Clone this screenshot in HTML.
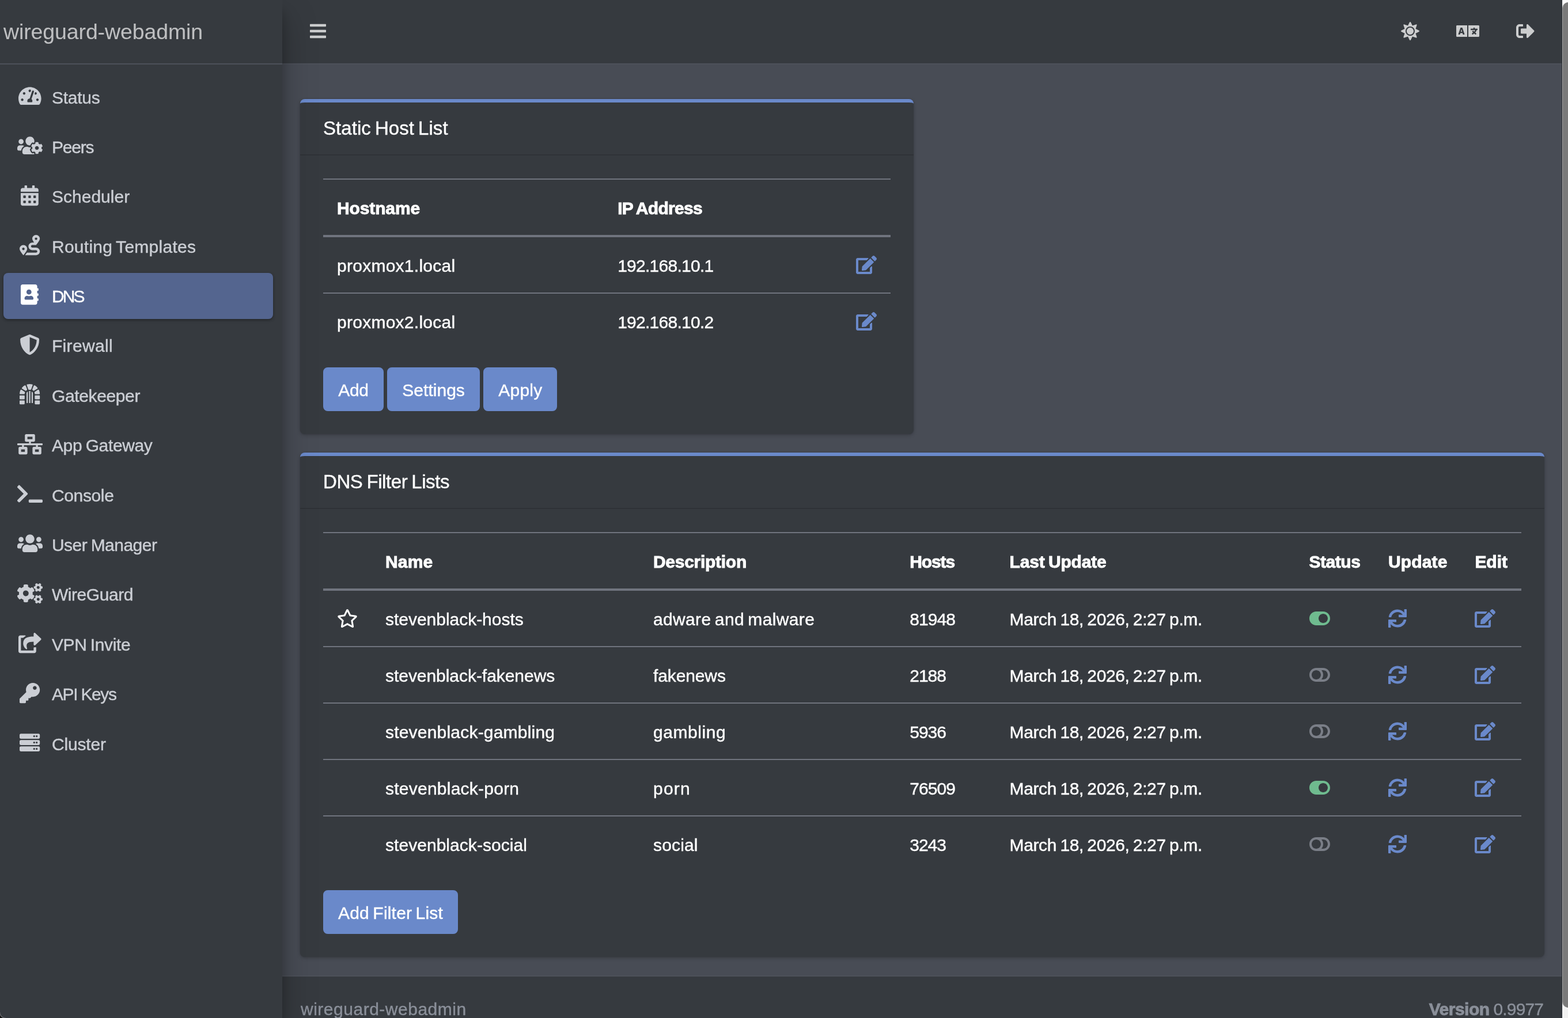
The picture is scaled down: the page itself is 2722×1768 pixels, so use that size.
<!DOCTYPE html>
<html lang="en">
<head>
<meta charset="utf-8">
<title>wireguard-webadmin</title>
<style>
*,*::before,*::after{box-sizing:border-box}
html{font-size:32px;-webkit-text-size-adjust:100%}
body{margin:0;width:2722px;height:1768px;overflow:hidden;position:relative;background:#484c55;color:#fff;
 font-family:"Liberation Sans", sans-serif;font-size:1rem;font-weight:400;line-height:1.5;text-align:left}
a{text-decoration:none;color:inherit}
p{margin:0}
ul{list-style:none;margin:0;padding:0}
svg.fa{display:inline-block;height:1em;overflow:visible;vertical-align:-.125em;fill:currentColor;position:relative;top:1.7px}
.t{white-space:nowrap;position:relative;top:2px}
.nav-sidebar .t{top:1px}
.card-title .t{top:0}
.brand-link .t{top:0}
th .t{top:1.5px}
.main-footer .t{top:1px}
#page{position:absolute;left:-10px;top:0;width:2722px;height:1768px}
/* navbar */
.main-header{position:absolute;left:500px;top:0;right:0;height:112px;background:#363a3f;border-bottom:2px solid #4d515a;
 display:flex;align-items:flex-start;padding:14.3px 16px 0;color:rgba(255,255,255,.75)}
.navbar-nav{display:flex;flex-direction:row}
.navbar-nav.ml-auto{margin-left:auto}
.main-header .nav-link{display:block;padding:.5rem 1rem;height:2.5rem;position:relative}
/* sidebar */
.main-sidebar{position:absolute;left:0;top:0;width:500px;height:1768px;background:#363a3f;z-index:5;
 box-shadow:0 28px 56px rgba(0,0,0,.25),0 20px 20px rgba(0,0,0,.22)}
.brand-link{display:block;font-size:1.25rem;line-height:1.5;height:112px;padding:.8125rem .5rem 0;border-bottom:2px solid #4d515a;
 color:rgba(255,255,255,.8);white-space:nowrap;font-weight:300}
.sidebar{padding:0 .5rem}
.sidebar nav{margin-top:16.5px}
.nav-sidebar .nav-link{display:block;position:relative;padding:.5rem 1rem .5rem 18.4px;margin-bottom:.2rem;border-radius:.25rem;color:#cbced4;white-space:nowrap}
.nav-sidebar .nav-link p{display:inline;margin:0}
.nav-sidebar .nav-link.active{background:#54658f;color:#fff;box-shadow:0 2px 6px rgba(0,0,0,.12),0 2px 4px rgba(0,0,0,.24)}
.nav-icon{display:inline-block;font-style:normal;line-height:1;font-size:1.1rem;width:1.6rem;margin-left:.05rem;margin-right:.2rem;text-align:center;white-space:nowrap}
.nav-icon svg{margin:0 -1em}
.sp{display:inline-block;width:6.4px}
/* content */
.content-wrapper{position:absolute;left:500px;top:112px;right:0;bottom:0;background:#484c55}
.content{position:absolute;left:531px;top:172px;width:2160px}
.card{position:relative;background:#363a3f;color:#fff;border-radius:.25rem;margin-bottom:1rem;
 box-shadow:0 0 2px rgba(0,0,0,.125),0 2px 6px rgba(0,0,0,.2);border-top:6px solid #6a89ca}
.card-header{padding:.75rem 1.25rem;border-bottom:2px solid rgba(0,0,0,.125);border-radius:.25rem .25rem 0 0}
.card-header::after{content:"";display:block;clear:both}
.card-title{float:left;font-size:1.1rem;font-weight:400;margin:0;line-height:1.2}
.card-body{padding:1.25rem}
table{width:100%;border-collapse:collapse;margin-bottom:1rem;color:#fff}
th,td{padding:.75rem;vertical-align:top;border-top:2px solid #70747e;text-align:left}
thead th{vertical-align:bottom;border-bottom:4px solid #70747e;font-weight:700}
td.min,th.min{width:1%;white-space:nowrap}
.lnk{color:#6a89ca}
.tog-on{color:#6fbb8f}
.tog-off{color:#7a7e87}
.btn{display:inline-block;font-weight:400;color:#fff;background:#6a89ca;border:2px solid #6a89ca;padding:.375rem .75rem;font-size:1rem;line-height:1.5;border-radius:.25rem;text-align:center;vertical-align:middle;
 box-shadow:none}
.col6{width:1065px}
/* footer */
.main-footer{position:absolute;left:500px;right:0;top:1694px;height:120px;background:#363a3f;border-top:2px solid #4d515a;color:#8a8f99;padding:1rem}
.float-right{float:right}
b{font-weight:700}
/* scrollbar */
#sb{position:absolute;left:2711px;top:0;width:11px;height:1768px;background:linear-gradient(#fcfcfc,#f2f2f2);border-left:1px solid #2f3237;z-index:10;overflow:hidden}
#sb i{position:absolute;left:1px;box-shadow:-1px 0 0 #a6a6a6;top:4px;width:30px;height:1746px;border-radius:10px;background:#7a7a7a}
#wc{position:absolute;left:0;top:1758px;width:10px;height:10px;z-index:11;background:radial-gradient(circle at 100% 0,rgba(0,0,0,0) 0,rgba(0,0,0,0) 9.2px,#63656a 10px,#63656a 10.6px,#0d0d0d 11.6px)}
body{word-spacing:-2.4906px}
#page{will-change:transform}
.t{display:inline-block;line-height:1;vertical-align:baseline;-webkit-text-stroke:.4px currentColor}
th .t,b .t{-webkit-text-stroke:.9px currentColor}
.brand-link .t{-webkit-text-stroke:0;color:rgba(255,255,255,.68)}
svg.fa{top:.7px}
.nav-icon svg.fa{top:.2px}

</style>
</head>
<body>
<div id="page">
 <div class="content-wrapper"></div>
 <nav class="main-header">
  <ul class="navbar-nav"><li><a class="nav-link"><svg class="fa " viewBox="0 -448 448 512" style="width:0.875em;" aria-hidden="true"><path transform="scale(1,-1)" d="M16 316c-8.83691 0 -16 7.16309 -16 16v40c0 8.83691 7.16309 16 16 16h416c8.83691 0 16 -7.16309 16 -16v-40c0 -8.83691 -7.16309 -16 -16 -16h-416zM16 156c-8.83691 0 -16 7.16309 -16 16v40c0 8.83691 7.16309 16 16 16h416c8.83691 0 16 -7.16309 16 -16v-40 c0 -8.83691 -7.16309 -16 -16 -16h-416zM16 -4c-8.83691 0 -16 7.16309 -16 16v40c0 8.83691 7.16309 16 16 16h416c8.83691 0 16 -7.16309 16 -16v-40c0 -8.83691 -7.16309 -16 -16 -16h-416z"/></svg></a></li></ul>
  <ul class="navbar-nav ml-auto">
   <li><a class="nav-link"><svg class="fa " viewBox="0 -448 512 512" style="width:1em;" aria-hidden="true"><path transform="scale(1,-1)" d="M256 288c52.9004 0 96 -43.0996 96 -96s-43.0996 -96 -96 -96s-96 43.0996 -96 96s43.0996 96 96 96zM502.4 207.5c12.7998 -6.40039 12.7998 -24.5996 -0.200195 -31.0996l-94.7002 -47.3008l33.5 -100.399c4.59961 -13.5 -8.2998 -26.4004 -21.9004 -21.9004 l-100.399 33.5l-47.2998 -94.7002c-6.40039 -12.7998 -24.6006 -12.7998 -31 0l-47.3008 94.7002l-100.399 -33.5c-13.5 -4.59961 -26.4004 8.2998 -21.9004 21.9004l33.5 100.5l-94.7002 47.2998c-12.7998 6.40039 -12.7998 24.5996 0 31l94.7002 47.4004l-33.5 100.399 c-4.59961 13.5 8.2998 26.4004 21.9004 21.9004l100.5 -33.5l47.2998 94.7002c6.40039 12.7998 24.5996 12.7998 31 0l47.4004 -94.8008l100.399 33.5c13.5 4.60059 26.4004 -8.2998 21.9004 -21.8994l-33.5 -100.4zM346.5 101.5c49.9004 49.9004 49.9004 131.1 0 181 s-131.1 49.9004 -181 0s-49.9004 -131.1 0 -181s131.1 -49.9004 181 0z"/></svg></a></li>
   <li><a class="nav-link"><svg class="fa " viewBox="0 -448 640 512" style="width:1.25em;" aria-hidden="true"><path transform="scale(1,-1)" d="M152.1 211.8l10.9004 -37.5h-38.0996l11.0996 37.5c3.5 12.1006 7.7998 33.2002 7.7998 33.2002h0.5s4.2998 -21.0996 7.7998 -33.2002zM616 352c13.2998 0 24 -10.7002 24 -24v-272c0 -13.2998 -10.7002 -24 -24 -24h-280v320h280zM592 232v16 c0 6.59961 -5.40039 12 -12 12h-64v16c0 6.59961 -5.40039 12 -12 12h-16c-6.59961 0 -12 -5.40039 -12 -12v-16h-64c-6.59961 0 -12 -5.40039 -12 -12v-16c0 -6.59961 5.40039 -12 12 -12h114.3c-6.2002 -14.2998 -16.5 -29 -30 -43.2002 c-6.59961 6.90039 -12.3994 13.9004 -17.3994 20.9004c-3.60059 5.09961 -10.6006 6.59961 -16 3.39941l-7.30078 -4.2998l-6.5 -3.89941c-5.89941 -3.5 -7.69922 -11.4004 -3.69922 -17.1006c6.09961 -8.7002 13.0996 -17.2998 21 -25.7002 c-8.10059 -6.2998 -16.8008 -12.2998 -26.1006 -18c-5.59961 -3.39941 -7.39941 -10.5996 -4.2002 -16.1992l7.90039 -13.9004c3.40039 -5.90039 10.9004 -7.7998 16.7002 -4.2998c12.7002 7.7998 24.5 16.2002 35.3994 24.8994 c10.9004 -8.7998 22.8008 -17.0996 35.4004 -24.8994c5.7998 -3.5 13.2998 -1.60059 16.7002 4.2998l7.89941 13.9004c3.2002 5.69922 1.40039 12.7998 -4.09961 16.1992c-9 5.5 -17.7002 11.6006 -26.0996 18c21 22.5 35.7998 46.3008 42.6992 69.9004h11.4004 c6.59961 0 12 5.40039 12 12zM0 328c0 13.2998 10.7002 24 24 24h280v-320h-280c-13.2998 0 -24 10.7002 -24 24v272zM58.9004 111.9c-2.60059 -7.80078 3.19922 -15.9004 11.3994 -15.9004h22.9004c5.2998 0 10 3.59961 11.5 8.7002l9.09961 31.7998h60.2002 l9.40039 -31.9004c1.4668 -4.96582 6.06152 -8.5957 11.5 -8.59961h22.8994c8.2998 0 14 8.09961 11.4004 15.9004l-57.5 169.1c-1.7002 4.7998 -6.2998 8.09961 -11.4004 8.09961h-32.5c-5.2002 0 -9.7002 -3.19922 -11.3994 -8.09961z"/></svg></a></li>
   <li><a class="nav-link"><svg class="fa " viewBox="0 -448 512 512" style="width:1em;" aria-hidden="true"><path transform="scale(1,-1)" d="M497 175l-168 -168c-15 -15 -41 -4.5 -41 17v96h-136c-13.2998 0 -24 10.7002 -24 24v96c0 13.2998 10.7002 24 24 24h136v96c0 21.4004 25.9004 32 41 17l168 -168c9.2998 -9.40039 9.2998 -24.5996 0 -34zM192 12c0 -6.59961 -5.40039 -12 -12 -12h-84 c-53 0 -96 43 -96 96v192c0 53 43 96 96 96h84c6.59961 0 12 -5.40039 12 -12v-40c0 -6.59961 -5.40039 -12 -12 -12h-84c-17.7002 0 -32 -14.2998 -32 -32v-192c0 -17.7002 14.2998 -32 32 -32h84c6.59961 0 12 -5.40039 12 -12v-40z"/></svg></a></li>
  </ul>
 </nav>
 <div class="content">
  <div class="card col6">
   <div class="card-header"><h3 class="card-title"><span class="t" id="t39" style="width:216.59px;font-size:33.00px;letter-spacing:0.059px;word-spacing:-2.188px;top:-1.00px;left:0.00px">Static Host List</span></h3></div>
   <div class="card-body">
    <table id="tb1">
     <thead><tr><th><span class="t" id="t40" style="width:144.14px;font-size:30.00px;letter-spacing:-0.129px;word-spacing:0.000px;top:0.50px;left:0.00px">Hostname</span></th><th><span class="t" id="t41" style="width:147.47px;font-size:30.00px;letter-spacing:-0.709px;word-spacing:-1.226px;top:0.50px;left:0.00px">IP Address</span></th><th></th></tr></thead>
     <tbody>
<tr><td><span class="t" id="t15" style="width:205.14px;font-size:30.00px;letter-spacing:0.260px;word-spacing:0.000px;top:1.00px;left:0.00px">proxmox1.local</span></td><td><span class="t" id="t16" style="width:167.05px;font-size:30.00px;letter-spacing:-0.739px;word-spacing:0.000px;top:1.00px;left:0.00px">192.168.10.1</span></td><td class="min"><a class="lnk"><svg class="fa " viewBox="0 -448 576 512" style="width:1.125em;" aria-hidden="true"><path transform="scale(1,-1)" d="M402.6 364.8l90.2002 -90.2002c3.7998 -3.7998 3.7998 -10 0 -13.7998l-218.399 -218.399l-92.8008 -10.3008c-12.3994 -1.39941 -22.8994 9.10059 -21.5 21.5l10.3008 92.8008l218.399 218.399c3.7998 3.7998 10 3.7998 13.7998 0zM564.6 387.7 c15.2002 -15.2002 15.2002 -39.9004 0 -55.2002l-35.3994 -35.4004c-3.7998 -3.7998 -10 -3.7998 -13.7998 0l-90.2002 90.2002c-3.7998 3.7998 -3.7998 10 0 13.7998l35.3994 35.4004c15.3008 15.2002 40 15.2002 55.2002 0zM384 101.8c0 3.2002 1.2998 6.2002 3.5 8.5 l40 40c7.59961 7.5 20.5 2.2002 20.5 -8.5v-157.8c0 -26.5 -21.5 -48 -48 -48h-352c-26.5 0 -48 21.5 -48 48v352c0 26.5 21.5 48 48 48h285.8c10.7002 0 16.1006 -12.9004 8.5 -20.5l-40 -40c-2.2998 -2.2002 -5.2998 -3.5 -8.5 -3.5h-229.8v-320h320v101.8z"/></svg></a></td></tr>
<tr><td><span class="t" id="t17" style="width:205.14px;font-size:30.00px;letter-spacing:0.260px;word-spacing:0.000px;top:1.00px;left:0.00px">proxmox2.local</span></td><td><span class="t" id="t18" style="width:167.05px;font-size:30.00px;letter-spacing:-0.739px;word-spacing:0.000px;top:1.00px;left:0.00px">192.168.10.2</span></td><td class="min"><a class="lnk"><svg class="fa " viewBox="0 -448 576 512" style="width:1.125em;" aria-hidden="true"><path transform="scale(1,-1)" d="M402.6 364.8l90.2002 -90.2002c3.7998 -3.7998 3.7998 -10 0 -13.7998l-218.399 -218.399l-92.8008 -10.3008c-12.3994 -1.39941 -22.8994 9.10059 -21.5 21.5l10.3008 92.8008l218.399 218.399c3.7998 3.7998 10 3.7998 13.7998 0zM564.6 387.7 c15.2002 -15.2002 15.2002 -39.9004 0 -55.2002l-35.3994 -35.4004c-3.7998 -3.7998 -10 -3.7998 -13.7998 0l-90.2002 90.2002c-3.7998 3.7998 -3.7998 10 0 13.7998l35.3994 35.4004c15.3008 15.2002 40 15.2002 55.2002 0zM384 101.8c0 3.2002 1.2998 6.2002 3.5 8.5 l40 40c7.59961 7.5 20.5 2.2002 20.5 -8.5v-157.8c0 -26.5 -21.5 -48 -48 -48h-352c-26.5 0 -48 21.5 -48 48v352c0 26.5 21.5 48 48 48h285.8c10.7002 0 16.1006 -12.9004 8.5 -20.5l-40 -40c-2.2998 -2.2002 -5.2998 -3.5 -8.5 -3.5h-229.8v-320h320v101.8z"/></svg></a></td></tr>

     </tbody>
    </table>
    <a class="btn"><span class="t" id="t42" style="width:52.91px;font-size:30.00px;letter-spacing:-0.242px;word-spacing:0.000px;top:1.00px;left:0.00px">Add</span></a>
    <a class="btn"><span class="t" id="t43" style="width:108.55px;font-size:30.00px;letter-spacing:0.020px;word-spacing:0.000px;top:1.00px;left:0.00px">Settings</span></a>
    <a class="btn"><span class="t" id="t44" style="width:76.02px;font-size:30.00px;letter-spacing:0.242px;word-spacing:0.000px;top:1.00px;left:0.00px">Apply</span></a>
   </div>
  </div>
  <div class="card">
   <div class="card-header"><h3 class="card-title"><span class="t" id="t45" style="width:219.45px;font-size:33.00px;letter-spacing:-0.423px;word-spacing:-1.706px;top:-1.00px;left:0.00px">DNS Filter Lists</span></h3></div>
   <div class="card-body">
    <table id="tb2">
     <thead><tr><th class="c0"></th><th class="c1"><span class="t" id="t46" style="width:82.16px;font-size:30.00px;letter-spacing:0.146px;word-spacing:0.000px;top:0.50px;left:0.00px">Name</span></th><th class="c2"><span class="t" id="t47" style="width:162.27px;font-size:30.00px;letter-spacing:-0.277px;word-spacing:0.000px;top:0.50px;left:0.00px">Description</span></th><th class="c3"><span class="t" id="t48" style="width:78.83px;font-size:30.00px;letter-spacing:-1.133px;word-spacing:0.000px;top:0.50px;left:0.00px">Hosts</span></th><th class="c4"><span class="t" id="t49" style="width:168.12px;font-size:30.00px;letter-spacing:-0.183px;word-spacing:-1.752px;top:0.50px;left:0.00px">Last Update</span></th><th class="c5"><span class="t" id="t50" style="width:89.39px;font-size:30.00px;letter-spacing:-0.459px;word-spacing:0.000px;top:0.50px;left:0.00px">Status</span></th><th class="c6"><span class="t" id="t51" style="width:102.48px;font-size:30.00px;letter-spacing:0.159px;word-spacing:0.000px;top:0.50px;left:0.00px">Update</span></th><th class="c7"><span class="t" id="t52" style="width:56.64px;font-size:30.00px;letter-spacing:-0.010px;word-spacing:0.000px;top:0.50px;left:0.00px">Edit</span></th></tr></thead>
     <tbody>
<tr><td class="min c0"><svg class="fa " viewBox="0 -448 576 512" style="width:1.125em;" aria-hidden="true"><path transform="scale(1,-1)" d="M528.1 276.5c26.2002 -3.7998 36.7002 -36.0996 17.7002 -54.5996l-105.7 -103l25 -145.5c4.5 -26.3008 -23.1992 -45.9004 -46.3994 -33.7002l-130.7 68.7002l-130.7 -68.7002c-23.2002 -12.2998 -50.8994 7.39941 -46.3994 33.7002l25 145.5l-105.7 103 c-19 18.5 -8.5 50.7998 17.7002 54.5996l146.1 21.2998l65.2998 132.4c11.7998 23.8994 45.7002 23.5996 57.4004 0l65.2998 -132.4zM388.6 135.7l100.601 98l-139 20.2002l-62.2002 126l-62.2002 -126l-139 -20.2002l100.601 -98l-23.7002 -138.4l124.3 65.2998 l124.3 -65.2998z"/></svg></td><td class="c1"><span class="t" id="t19" style="width:239.69px;font-size:30.00px;letter-spacing:-0.027px;word-spacing:0.000px;top:1.00px;left:0.00px">stevenblack-hosts</span></td><td class="c2"><span class="t" id="t20" style="width:279.84px;font-size:30.00px;letter-spacing:0.349px;word-spacing:-2.284px;top:1.00px;left:0.00px">adware and malware</span></td><td class="c3"><span class="t" id="t21" style="width:79.53px;font-size:30.00px;letter-spacing:-0.977px;word-spacing:0.000px;top:1.00px;left:0.00px">81948</span></td><td class="c4"><span class="t" id="t22" style="width:334.73px;font-size:30.00px;letter-spacing:-0.386px;word-spacing:-1.549px;top:1.00px;left:0.00px">March 18, 2026, 2:27 p.m.</span></td><td class="min c5"><span class="tog-on"><svg class="fa " viewBox="0 -448 576 512" style="width:1.125em;" aria-hidden="true"><path transform="scale(1,-1)" d="M384 384c106 0 192 -86 192 -192s-86 -192 -192 -192h-192c-106 0 -192 86 -192 192s86 192 192 192h192zM384 64c70.7002 0 128 57.2002 128 128c0 70.7002 -57.2002 128 -128 128c-70.7002 0 -128 -57.2002 -128 -128c0 -70.7002 57.2002 -128 128 -128z"/></svg></span></td><td class="min c6"><a class="lnk"><svg class="fa " viewBox="0 -448 512 512" style="width:1em;" aria-hidden="true"><path transform="scale(1,-1)" d="M440.65 435.43c-0.00976562 0.192383 -0.0136719 0.375977 -0.0136719 0.570312c0 6.62109 5.37305 11.9961 11.9932 12h47.3701c6.62305 0 12 -5.37695 12 -12v-200.35c0 -6.62305 -5.37695 -12 -12 -12h-200.22c-6.62305 0 -12 5.37695 -12 12v47.4092 c0 0.00488281 -0.00878906 0.00976562 -0.00878906 0.0136719c0 6.62305 5.37695 12 12 12c0.194336 0 0.386719 -0.00390625 0.578125 -0.0136719l101.46 -4.85938c-31.5938 46.9941 -85.1406 77.6738 -145.973 77.6738c-82.8662 0 -152.428 -57.4229 -171.027 -134.614 c-1.24219 -5.29688 -5.99707 -9.25391 -11.6699 -9.25977h-49.0498c-6.62305 0 -12 5.36719 -12 11.9893c0 0.748047 0.0693359 1.48047 0.200195 2.19043c21.6201 114.9 122.44 201.82 243.54 201.82c0.0966797 0 0.123047 0.141602 0.219727 0.141602 c75.5615 0 143.248 -33.9814 188.601 -87.4814zM255.83 16c0.015625 0 0.0185547 0.0898438 0.0332031 0.0898438c82.8701 0 152.43 57.4434 170.997 134.65c1.24219 5.29688 5.99707 9.25391 11.6699 9.25977h49.0498c6.62305 0 12 -5.36719 12 -11.9893 c0 -0.748047 -0.0693359 -1.48047 -0.200195 -2.19043c-21.6201 -114.9 -122.439 -201.82 -243.55 -201.82c-0.0800781 0 -0.0908203 -0.140625 -0.170898 -0.140625c-75.4814 0 -143.106 33.9082 -188.459 87.3105l4.14941 -82.5703 c0.0107422 -0.201172 0.015625 -0.395508 0.015625 -0.599609c0 -6.62305 -5.37695 -12 -12 -12h-0.015625h-47.3496c-6.62305 0 -12 5.37695 -12 12v200.33c0 6.62305 5.37695 12 12 12h200.2c6.62305 0 12 -5.37695 12 -12v-47.4004 c0 -0.00390625 0.0078125 -0.00878906 0.0078125 -0.0136719c0 -6.62305 -5.37695 -12 -12 -12c-0.193359 0 -0.386719 0.00488281 -0.578125 0.0136719l-101.8 4.87012c31.5254 -47.0088 85.0449 -77.7998 145.847 -77.7998h0.15332z"/></svg></a></td><td class="min c7"><a class="lnk"><svg class="fa " viewBox="0 -448 576 512" style="width:1.125em;" aria-hidden="true"><path transform="scale(1,-1)" d="M402.6 364.8l90.2002 -90.2002c3.7998 -3.7998 3.7998 -10 0 -13.7998l-218.399 -218.399l-92.8008 -10.3008c-12.3994 -1.39941 -22.8994 9.10059 -21.5 21.5l10.3008 92.8008l218.399 218.399c3.7998 3.7998 10 3.7998 13.7998 0zM564.6 387.7 c15.2002 -15.2002 15.2002 -39.9004 0 -55.2002l-35.3994 -35.4004c-3.7998 -3.7998 -10 -3.7998 -13.7998 0l-90.2002 90.2002c-3.7998 3.7998 -3.7998 10 0 13.7998l35.3994 35.4004c15.3008 15.2002 40 15.2002 55.2002 0zM384 101.8c0 3.2002 1.2998 6.2002 3.5 8.5 l40 40c7.59961 7.5 20.5 2.2002 20.5 -8.5v-157.8c0 -26.5 -21.5 -48 -48 -48h-352c-26.5 0 -48 21.5 -48 48v352c0 26.5 21.5 48 48 48h285.8c10.7002 0 16.1006 -12.9004 8.5 -20.5l-40 -40c-2.2998 -2.2002 -5.2998 -3.5 -8.5 -3.5h-229.8v-320h320v101.8z"/></svg></a></td></tr>
<tr><td class="min c0"></td><td class="c1"><span class="t" id="t23" style="width:294.27px;font-size:30.00px;letter-spacing:-0.047px;word-spacing:0.000px;top:1.00px;left:0.00px">stevenblack-fakenews</span></td><td class="c2"><span class="t" id="t24" style="width:125.94px;font-size:30.00px;letter-spacing:-0.116px;word-spacing:0.000px;top:1.00px;left:0.00px">fakenews</span></td><td class="c3"><span class="t" id="t25" style="width:63.62px;font-size:30.00px;letter-spacing:-1.042px;word-spacing:0.000px;top:1.00px;left:0.00px">2188</span></td><td class="c4"><span class="t" id="t26" style="width:334.73px;font-size:30.00px;letter-spacing:-0.386px;word-spacing:-1.549px;top:1.00px;left:0.00px">March 18, 2026, 2:27 p.m.</span></td><td class="min c5"><span class="tog-off"><svg class="fa " viewBox="0 -448 576 512" style="width:1.125em;" aria-hidden="true"><path transform="scale(1,-1)" d="M384 384c106.039 0 192 -85.9609 192 -192s-85.9609 -192 -192 -192h-192c-106.039 0 -192 85.9609 -192 192s85.9609 192 192 192h192zM64 192c0 -70.751 57.2588 -128 128 -128c70.751 0 128 57.2588 128 128c0 70.751 -57.2588 128 -128 128 c-70.751 0 -128 -57.2588 -128 -128zM384 64c70.751 0 128 57.2598 128 128c0 70.751 -57.2588 128 -128 128h-48.9053c65.2363 -72.8799 65.2168 -183.142 0 -256h48.9053z"/></svg></span></td><td class="min c6"><a class="lnk"><svg class="fa " viewBox="0 -448 512 512" style="width:1em;" aria-hidden="true"><path transform="scale(1,-1)" d="M440.65 435.43c-0.00976562 0.192383 -0.0136719 0.375977 -0.0136719 0.570312c0 6.62109 5.37305 11.9961 11.9932 12h47.3701c6.62305 0 12 -5.37695 12 -12v-200.35c0 -6.62305 -5.37695 -12 -12 -12h-200.22c-6.62305 0 -12 5.37695 -12 12v47.4092 c0 0.00488281 -0.00878906 0.00976562 -0.00878906 0.0136719c0 6.62305 5.37695 12 12 12c0.194336 0 0.386719 -0.00390625 0.578125 -0.0136719l101.46 -4.85938c-31.5938 46.9941 -85.1406 77.6738 -145.973 77.6738c-82.8662 0 -152.428 -57.4229 -171.027 -134.614 c-1.24219 -5.29688 -5.99707 -9.25391 -11.6699 -9.25977h-49.0498c-6.62305 0 -12 5.36719 -12 11.9893c0 0.748047 0.0693359 1.48047 0.200195 2.19043c21.6201 114.9 122.44 201.82 243.54 201.82c0.0966797 0 0.123047 0.141602 0.219727 0.141602 c75.5615 0 143.248 -33.9814 188.601 -87.4814zM255.83 16c0.015625 0 0.0185547 0.0898438 0.0332031 0.0898438c82.8701 0 152.43 57.4434 170.997 134.65c1.24219 5.29688 5.99707 9.25391 11.6699 9.25977h49.0498c6.62305 0 12 -5.36719 12 -11.9893 c0 -0.748047 -0.0693359 -1.48047 -0.200195 -2.19043c-21.6201 -114.9 -122.439 -201.82 -243.55 -201.82c-0.0800781 0 -0.0908203 -0.140625 -0.170898 -0.140625c-75.4814 0 -143.106 33.9082 -188.459 87.3105l4.14941 -82.5703 c0.0107422 -0.201172 0.015625 -0.395508 0.015625 -0.599609c0 -6.62305 -5.37695 -12 -12 -12h-0.015625h-47.3496c-6.62305 0 -12 5.37695 -12 12v200.33c0 6.62305 5.37695 12 12 12h200.2c6.62305 0 12 -5.37695 12 -12v-47.4004 c0 -0.00390625 0.0078125 -0.00878906 0.0078125 -0.0136719c0 -6.62305 -5.37695 -12 -12 -12c-0.193359 0 -0.386719 0.00488281 -0.578125 0.0136719l-101.8 4.87012c31.5254 -47.0088 85.0449 -77.7998 145.847 -77.7998h0.15332z"/></svg></a></td><td class="min c7"><a class="lnk"><svg class="fa " viewBox="0 -448 576 512" style="width:1.125em;" aria-hidden="true"><path transform="scale(1,-1)" d="M402.6 364.8l90.2002 -90.2002c3.7998 -3.7998 3.7998 -10 0 -13.7998l-218.399 -218.399l-92.8008 -10.3008c-12.3994 -1.39941 -22.8994 9.10059 -21.5 21.5l10.3008 92.8008l218.399 218.399c3.7998 3.7998 10 3.7998 13.7998 0zM564.6 387.7 c15.2002 -15.2002 15.2002 -39.9004 0 -55.2002l-35.3994 -35.4004c-3.7998 -3.7998 -10 -3.7998 -13.7998 0l-90.2002 90.2002c-3.7998 3.7998 -3.7998 10 0 13.7998l35.3994 35.4004c15.3008 15.2002 40 15.2002 55.2002 0zM384 101.8c0 3.2002 1.2998 6.2002 3.5 8.5 l40 40c7.59961 7.5 20.5 2.2002 20.5 -8.5v-157.8c0 -26.5 -21.5 -48 -48 -48h-352c-26.5 0 -48 21.5 -48 48v352c0 26.5 21.5 48 48 48h285.8c10.7002 0 16.1006 -12.9004 8.5 -20.5l-40 -40c-2.2998 -2.2002 -5.2998 -3.5 -8.5 -3.5h-229.8v-320h320v101.8z"/></svg></a></td></tr>
<tr><td class="min c0"></td><td class="c1"><span class="t" id="t27" style="width:293.97px;font-size:30.00px;letter-spacing:0.201px;word-spacing:0.000px;top:1.00px;left:0.00px">stevenblack-gambling</span></td><td class="c2"><span class="t" id="t28" style="width:125.64px;font-size:30.00px;letter-spacing:0.556px;word-spacing:0.000px;top:1.00px;left:0.00px">gambling</span></td><td class="c3"><span class="t" id="t29" style="width:63.62px;font-size:30.00px;letter-spacing:-1.042px;word-spacing:0.000px;top:1.00px;left:0.00px">5936</span></td><td class="c4"><span class="t" id="t30" style="width:334.73px;font-size:30.00px;letter-spacing:-0.386px;word-spacing:-1.549px;top:1.00px;left:0.00px">March 18, 2026, 2:27 p.m.</span></td><td class="min c5"><span class="tog-off"><svg class="fa " viewBox="0 -448 576 512" style="width:1.125em;" aria-hidden="true"><path transform="scale(1,-1)" d="M384 384c106.039 0 192 -85.9609 192 -192s-85.9609 -192 -192 -192h-192c-106.039 0 -192 85.9609 -192 192s85.9609 192 192 192h192zM64 192c0 -70.751 57.2588 -128 128 -128c70.751 0 128 57.2588 128 128c0 70.751 -57.2588 128 -128 128 c-70.751 0 -128 -57.2588 -128 -128zM384 64c70.751 0 128 57.2598 128 128c0 70.751 -57.2588 128 -128 128h-48.9053c65.2363 -72.8799 65.2168 -183.142 0 -256h48.9053z"/></svg></span></td><td class="min c6"><a class="lnk"><svg class="fa " viewBox="0 -448 512 512" style="width:1em;" aria-hidden="true"><path transform="scale(1,-1)" d="M440.65 435.43c-0.00976562 0.192383 -0.0136719 0.375977 -0.0136719 0.570312c0 6.62109 5.37305 11.9961 11.9932 12h47.3701c6.62305 0 12 -5.37695 12 -12v-200.35c0 -6.62305 -5.37695 -12 -12 -12h-200.22c-6.62305 0 -12 5.37695 -12 12v47.4092 c0 0.00488281 -0.00878906 0.00976562 -0.00878906 0.0136719c0 6.62305 5.37695 12 12 12c0.194336 0 0.386719 -0.00390625 0.578125 -0.0136719l101.46 -4.85938c-31.5938 46.9941 -85.1406 77.6738 -145.973 77.6738c-82.8662 0 -152.428 -57.4229 -171.027 -134.614 c-1.24219 -5.29688 -5.99707 -9.25391 -11.6699 -9.25977h-49.0498c-6.62305 0 -12 5.36719 -12 11.9893c0 0.748047 0.0693359 1.48047 0.200195 2.19043c21.6201 114.9 122.44 201.82 243.54 201.82c0.0966797 0 0.123047 0.141602 0.219727 0.141602 c75.5615 0 143.248 -33.9814 188.601 -87.4814zM255.83 16c0.015625 0 0.0185547 0.0898438 0.0332031 0.0898438c82.8701 0 152.43 57.4434 170.997 134.65c1.24219 5.29688 5.99707 9.25391 11.6699 9.25977h49.0498c6.62305 0 12 -5.36719 12 -11.9893 c0 -0.748047 -0.0693359 -1.48047 -0.200195 -2.19043c-21.6201 -114.9 -122.439 -201.82 -243.55 -201.82c-0.0800781 0 -0.0908203 -0.140625 -0.170898 -0.140625c-75.4814 0 -143.106 33.9082 -188.459 87.3105l4.14941 -82.5703 c0.0107422 -0.201172 0.015625 -0.395508 0.015625 -0.599609c0 -6.62305 -5.37695 -12 -12 -12h-0.015625h-47.3496c-6.62305 0 -12 5.37695 -12 12v200.33c0 6.62305 5.37695 12 12 12h200.2c6.62305 0 12 -5.37695 12 -12v-47.4004 c0 -0.00390625 0.0078125 -0.00878906 0.0078125 -0.0136719c0 -6.62305 -5.37695 -12 -12 -12c-0.193359 0 -0.386719 0.00488281 -0.578125 0.0136719l-101.8 4.87012c31.5254 -47.0088 85.0449 -77.7998 145.847 -77.7998h0.15332z"/></svg></a></td><td class="min c7"><a class="lnk"><svg class="fa " viewBox="0 -448 576 512" style="width:1.125em;" aria-hidden="true"><path transform="scale(1,-1)" d="M402.6 364.8l90.2002 -90.2002c3.7998 -3.7998 3.7998 -10 0 -13.7998l-218.399 -218.399l-92.8008 -10.3008c-12.3994 -1.39941 -22.8994 9.10059 -21.5 21.5l10.3008 92.8008l218.399 218.399c3.7998 3.7998 10 3.7998 13.7998 0zM564.6 387.7 c15.2002 -15.2002 15.2002 -39.9004 0 -55.2002l-35.3994 -35.4004c-3.7998 -3.7998 -10 -3.7998 -13.7998 0l-90.2002 90.2002c-3.7998 3.7998 -3.7998 10 0 13.7998l35.3994 35.4004c15.3008 15.2002 40 15.2002 55.2002 0zM384 101.8c0 3.2002 1.2998 6.2002 3.5 8.5 l40 40c7.59961 7.5 20.5 2.2002 20.5 -8.5v-157.8c0 -26.5 -21.5 -48 -48 -48h-352c-26.5 0 -48 21.5 -48 48v352c0 26.5 21.5 48 48 48h285.8c10.7002 0 16.1006 -12.9004 8.5 -20.5l-40 -40c-2.2998 -2.2002 -5.2998 -3.5 -8.5 -3.5h-229.8v-320h320v101.8z"/></svg></a></td></tr>
<tr><td class="min c0"></td><td class="c1"><span class="t" id="t31" style="width:232.05px;font-size:30.00px;letter-spacing:0.239px;word-spacing:0.000px;top:1.00px;left:0.00px">stevenblack-porn</span></td><td class="c2"><span class="t" id="t32" style="width:63.72px;font-size:30.00px;letter-spacing:1.224px;word-spacing:0.000px;top:1.00px;left:0.00px">porn</span></td><td class="c3"><span class="t" id="t33" style="width:79.53px;font-size:30.00px;letter-spacing:-0.977px;word-spacing:0.000px;top:1.00px;left:0.00px">76509</span></td><td class="c4"><span class="t" id="t34" style="width:334.73px;font-size:30.00px;letter-spacing:-0.386px;word-spacing:-1.549px;top:1.00px;left:0.00px">March 18, 2026, 2:27 p.m.</span></td><td class="min c5"><span class="tog-on"><svg class="fa " viewBox="0 -448 576 512" style="width:1.125em;" aria-hidden="true"><path transform="scale(1,-1)" d="M384 384c106 0 192 -86 192 -192s-86 -192 -192 -192h-192c-106 0 -192 86 -192 192s86 192 192 192h192zM384 64c70.7002 0 128 57.2002 128 128c0 70.7002 -57.2002 128 -128 128c-70.7002 0 -128 -57.2002 -128 -128c0 -70.7002 57.2002 -128 128 -128z"/></svg></span></td><td class="min c6"><a class="lnk"><svg class="fa " viewBox="0 -448 512 512" style="width:1em;" aria-hidden="true"><path transform="scale(1,-1)" d="M440.65 435.43c-0.00976562 0.192383 -0.0136719 0.375977 -0.0136719 0.570312c0 6.62109 5.37305 11.9961 11.9932 12h47.3701c6.62305 0 12 -5.37695 12 -12v-200.35c0 -6.62305 -5.37695 -12 -12 -12h-200.22c-6.62305 0 -12 5.37695 -12 12v47.4092 c0 0.00488281 -0.00878906 0.00976562 -0.00878906 0.0136719c0 6.62305 5.37695 12 12 12c0.194336 0 0.386719 -0.00390625 0.578125 -0.0136719l101.46 -4.85938c-31.5938 46.9941 -85.1406 77.6738 -145.973 77.6738c-82.8662 0 -152.428 -57.4229 -171.027 -134.614 c-1.24219 -5.29688 -5.99707 -9.25391 -11.6699 -9.25977h-49.0498c-6.62305 0 -12 5.36719 -12 11.9893c0 0.748047 0.0693359 1.48047 0.200195 2.19043c21.6201 114.9 122.44 201.82 243.54 201.82c0.0966797 0 0.123047 0.141602 0.219727 0.141602 c75.5615 0 143.248 -33.9814 188.601 -87.4814zM255.83 16c0.015625 0 0.0185547 0.0898438 0.0332031 0.0898438c82.8701 0 152.43 57.4434 170.997 134.65c1.24219 5.29688 5.99707 9.25391 11.6699 9.25977h49.0498c6.62305 0 12 -5.36719 12 -11.9893 c0 -0.748047 -0.0693359 -1.48047 -0.200195 -2.19043c-21.6201 -114.9 -122.439 -201.82 -243.55 -201.82c-0.0800781 0 -0.0908203 -0.140625 -0.170898 -0.140625c-75.4814 0 -143.106 33.9082 -188.459 87.3105l4.14941 -82.5703 c0.0107422 -0.201172 0.015625 -0.395508 0.015625 -0.599609c0 -6.62305 -5.37695 -12 -12 -12h-0.015625h-47.3496c-6.62305 0 -12 5.37695 -12 12v200.33c0 6.62305 5.37695 12 12 12h200.2c6.62305 0 12 -5.37695 12 -12v-47.4004 c0 -0.00390625 0.0078125 -0.00878906 0.0078125 -0.0136719c0 -6.62305 -5.37695 -12 -12 -12c-0.193359 0 -0.386719 0.00488281 -0.578125 0.0136719l-101.8 4.87012c31.5254 -47.0088 85.0449 -77.7998 145.847 -77.7998h0.15332z"/></svg></a></td><td class="min c7"><a class="lnk"><svg class="fa " viewBox="0 -448 576 512" style="width:1.125em;" aria-hidden="true"><path transform="scale(1,-1)" d="M402.6 364.8l90.2002 -90.2002c3.7998 -3.7998 3.7998 -10 0 -13.7998l-218.399 -218.399l-92.8008 -10.3008c-12.3994 -1.39941 -22.8994 9.10059 -21.5 21.5l10.3008 92.8008l218.399 218.399c3.7998 3.7998 10 3.7998 13.7998 0zM564.6 387.7 c15.2002 -15.2002 15.2002 -39.9004 0 -55.2002l-35.3994 -35.4004c-3.7998 -3.7998 -10 -3.7998 -13.7998 0l-90.2002 90.2002c-3.7998 3.7998 -3.7998 10 0 13.7998l35.3994 35.4004c15.3008 15.2002 40 15.2002 55.2002 0zM384 101.8c0 3.2002 1.2998 6.2002 3.5 8.5 l40 40c7.59961 7.5 20.5 2.2002 20.5 -8.5v-157.8c0 -26.5 -21.5 -48 -48 -48h-352c-26.5 0 -48 21.5 -48 48v352c0 26.5 21.5 48 48 48h285.8c10.7002 0 16.1006 -12.9004 8.5 -20.5l-40 -40c-2.2998 -2.2002 -5.2998 -3.5 -8.5 -3.5h-229.8v-320h320v101.8z"/></svg></a></td></tr>
<tr><td class="min c0"></td><td class="c1"><span class="t" id="t35" style="width:245.84px;font-size:30.00px;letter-spacing:0.042px;word-spacing:0.000px;top:1.00px;left:0.00px">stevenblack-social</span></td><td class="c2"><span class="t" id="t36" style="width:77.52px;font-size:30.00px;letter-spacing:0.163px;word-spacing:0.000px;top:1.00px;left:0.00px">social</span></td><td class="c3"><span class="t" id="t37" style="width:63.62px;font-size:30.00px;letter-spacing:-1.042px;word-spacing:0.000px;top:1.00px;left:0.00px">3243</span></td><td class="c4"><span class="t" id="t38" style="width:334.73px;font-size:30.00px;letter-spacing:-0.386px;word-spacing:-1.549px;top:1.00px;left:0.00px">March 18, 2026, 2:27 p.m.</span></td><td class="min c5"><span class="tog-off"><svg class="fa " viewBox="0 -448 576 512" style="width:1.125em;" aria-hidden="true"><path transform="scale(1,-1)" d="M384 384c106.039 0 192 -85.9609 192 -192s-85.9609 -192 -192 -192h-192c-106.039 0 -192 85.9609 -192 192s85.9609 192 192 192h192zM64 192c0 -70.751 57.2588 -128 128 -128c70.751 0 128 57.2588 128 128c0 70.751 -57.2588 128 -128 128 c-70.751 0 -128 -57.2588 -128 -128zM384 64c70.751 0 128 57.2598 128 128c0 70.751 -57.2588 128 -128 128h-48.9053c65.2363 -72.8799 65.2168 -183.142 0 -256h48.9053z"/></svg></span></td><td class="min c6"><a class="lnk"><svg class="fa " viewBox="0 -448 512 512" style="width:1em;" aria-hidden="true"><path transform="scale(1,-1)" d="M440.65 435.43c-0.00976562 0.192383 -0.0136719 0.375977 -0.0136719 0.570312c0 6.62109 5.37305 11.9961 11.9932 12h47.3701c6.62305 0 12 -5.37695 12 -12v-200.35c0 -6.62305 -5.37695 -12 -12 -12h-200.22c-6.62305 0 -12 5.37695 -12 12v47.4092 c0 0.00488281 -0.00878906 0.00976562 -0.00878906 0.0136719c0 6.62305 5.37695 12 12 12c0.194336 0 0.386719 -0.00390625 0.578125 -0.0136719l101.46 -4.85938c-31.5938 46.9941 -85.1406 77.6738 -145.973 77.6738c-82.8662 0 -152.428 -57.4229 -171.027 -134.614 c-1.24219 -5.29688 -5.99707 -9.25391 -11.6699 -9.25977h-49.0498c-6.62305 0 -12 5.36719 -12 11.9893c0 0.748047 0.0693359 1.48047 0.200195 2.19043c21.6201 114.9 122.44 201.82 243.54 201.82c0.0966797 0 0.123047 0.141602 0.219727 0.141602 c75.5615 0 143.248 -33.9814 188.601 -87.4814zM255.83 16c0.015625 0 0.0185547 0.0898438 0.0332031 0.0898438c82.8701 0 152.43 57.4434 170.997 134.65c1.24219 5.29688 5.99707 9.25391 11.6699 9.25977h49.0498c6.62305 0 12 -5.36719 12 -11.9893 c0 -0.748047 -0.0693359 -1.48047 -0.200195 -2.19043c-21.6201 -114.9 -122.439 -201.82 -243.55 -201.82c-0.0800781 0 -0.0908203 -0.140625 -0.170898 -0.140625c-75.4814 0 -143.106 33.9082 -188.459 87.3105l4.14941 -82.5703 c0.0107422 -0.201172 0.015625 -0.395508 0.015625 -0.599609c0 -6.62305 -5.37695 -12 -12 -12h-0.015625h-47.3496c-6.62305 0 -12 5.37695 -12 12v200.33c0 6.62305 5.37695 12 12 12h200.2c6.62305 0 12 -5.37695 12 -12v-47.4004 c0 -0.00390625 0.0078125 -0.00878906 0.0078125 -0.0136719c0 -6.62305 -5.37695 -12 -12 -12c-0.193359 0 -0.386719 0.00488281 -0.578125 0.0136719l-101.8 4.87012c31.5254 -47.0088 85.0449 -77.7998 145.847 -77.7998h0.15332z"/></svg></a></td><td class="min c7"><a class="lnk"><svg class="fa " viewBox="0 -448 576 512" style="width:1.125em;" aria-hidden="true"><path transform="scale(1,-1)" d="M402.6 364.8l90.2002 -90.2002c3.7998 -3.7998 3.7998 -10 0 -13.7998l-218.399 -218.399l-92.8008 -10.3008c-12.3994 -1.39941 -22.8994 9.10059 -21.5 21.5l10.3008 92.8008l218.399 218.399c3.7998 3.7998 10 3.7998 13.7998 0zM564.6 387.7 c15.2002 -15.2002 15.2002 -39.9004 0 -55.2002l-35.3994 -35.4004c-3.7998 -3.7998 -10 -3.7998 -13.7998 0l-90.2002 90.2002c-3.7998 3.7998 -3.7998 10 0 13.7998l35.3994 35.4004c15.3008 15.2002 40 15.2002 55.2002 0zM384 101.8c0 3.2002 1.2998 6.2002 3.5 8.5 l40 40c7.59961 7.5 20.5 2.2002 20.5 -8.5v-157.8c0 -26.5 -21.5 -48 -48 -48h-352c-26.5 0 -48 21.5 -48 48v352c0 26.5 21.5 48 48 48h285.8c10.7002 0 16.1006 -12.9004 8.5 -20.5l-40 -40c-2.2998 -2.2002 -5.2998 -3.5 -8.5 -3.5h-229.8v-320h320v101.8z"/></svg></a></td></tr>

     </tbody>
    </table>
    <a class="btn"><span class="t" id="t53" style="width:181.91px;font-size:30.00px;letter-spacing:0.197px;word-spacing:-2.132px;top:1.00px;left:0.00px">Add Filter List</span></a>
   </div>
  </div>
 </div>
 <footer class="main-footer">
  <div class="float-right"><b><span class="t" id="t54" style="width:105.33px;font-size:30.00px;letter-spacing:-0.510px;word-spacing:0.000px;top:0.00px;left:0.00px">Version</span></b> <span class="t" id="t55" style="width:87.50px;font-size:30.00px;letter-spacing:-0.853px;word-spacing:0.000px;top:0.00px;left:0.00px">0.9977</span></div>
  <span class="t" id="t56" style="width:287.19px;font-size:30.00px;letter-spacing:0.513px;word-spacing:0.000px;top:0.00px;left:0.00px">wireguard-webadmin</span>
 </footer>
 <aside class="main-sidebar">
  <a class="brand-link"><span class="brand-text"><span class="t" id="t57" style="width:346.11px;font-size:37.50px;letter-spacing:-0.117px;word-spacing:0.000px;top:-2.00px;left:0.00px">wireguard-webadmin</span></span></a>
  <div class="sidebar"><nav><ul class="nav-sidebar">
<li class="nav-item"><a class="nav-link"><i class="nav-icon"><svg class="fa " viewBox="0 -448 576 512" style="width:1.125em;" aria-hidden="true"><path transform="scale(1,-1)" d="M288 416c159.06 0 288 -128.94 288 -288c0 -52.7998 -14.25 -102.26 -39.0596 -144.8c-5.61035 -9.62012 -16.3008 -15.2002 -27.4404 -15.2002h-443c-11.1396 0 -21.8301 5.58008 -27.4404 15.2002c-24.8096 42.54 -39.0596 92 -39.0596 144.8 c0 159.06 128.94 288 288 288zM288 352c-17.6699 0 -31.9902 -14.3301 -31.9902 -32s14.3301 -32 32 -32c6.66992 0 12.5098 2.51953 17.6406 6.00977l9.21973 27.6699c0.80957 2.44043 2.33984 4.41016 3.4502 6.66992c-3.74023 13.5205 -15.6104 23.6504 -30.3203 23.6504 zM96 64c17.6699 0 32 14.3301 32 32s-14.3301 32 -32 32s-32 -14.3301 -32 -32s14.3301 -32 32 -32zM144 224c17.6699 0 32 14.3301 32 32s-14.3301 32 -32 32s-32 -14.3301 -32 -32s14.3301 -32 32 -32zM390.77 296.41c4.18066 12.5703 -2.59961 26.1699 -15.1699 30.3594 c-12.6299 4.28027 -26.1895 -2.60938 -30.3594 -15.1699l-61.3398 -184.01c-33.4004 -2.16016 -59.9004 -29.6494 -59.9004 -63.5898c0 -11.7197 3.37988 -22.5498 8.87988 -32h110.24c5.5 9.4502 8.87988 20.2803 8.87988 32c0 19.46 -8.87012 36.6699 -22.5596 48.4102z M405.43 239.21c5.68066 -8.94043 15.1904 -15.21 26.5703 -15.2197c17.6699 0 32 14.3301 32 32s-14.3301 32 -32 32c-3.91992 0 -7.58008 -0.94043 -11.0498 -2.23047zM480 64c17.6699 0 32 14.3301 32 32s-14.3301 32 -32 32s-32 -14.3301 -32 -32s14.3301 -32 32 -32z"/></svg></i><b class="sp"></b><p><span class="t" id="t1" style="width:83.80px;font-size:30.00px;letter-spacing:-0.253px;word-spacing:0.000px;top:0.00px;left:0.00px">Status</span></p></a></li>
<li class="nav-item"><a class="nav-link"><i class="nav-icon"><svg class="fa " viewBox="0 -448 640 512" style="width:1.25em;" aria-hidden="true"><path transform="scale(1,-1)" d="M610.5 106.7l25.7998 -14.9004c2.90039 -1.7002 4.2998 -5.2002 3.2998 -8.5c-6.69922 -21.5996 -18.1992 -41.2002 -33.1992 -57.3994c-2.30078 -2.5 -6.10059 -3.10059 -9 -1.40039l-25.8008 14.9004c-10.8994 -9.30078 -23.3994 -16.5 -36.8994 -21.3008v-29.7998 c0 -3.39941 -2.40039 -6.39941 -5.7002 -7.09961c-21.2002 -4.7998 -43.9004 -5 -66.2002 0c-3.2998 0.700195 -5.7002 3.7002 -5.7002 7.09961v29.7998c-13.5 4.80078 -26 12 -36.8994 21.3008l-25.7998 -14.9004c-3 -1.7002 -6.7002 -1.09961 -9 1.40039 c-15 16.2998 -26.5 35.7998 -33.2002 57.3994c-1 3.2998 0.299805 6.7998 3.2998 8.5l25.7998 14.9004c-2.59961 14.0996 -2.59961 28.5 0 42.5996l-25.7998 14.9004c-2.90039 1.7002 -4.2998 5.2002 -3.2998 8.5c6.7002 21.5996 18.2002 41.2002 33.2002 57.3994 c2.2998 2.5 6.09961 3.10059 9 1.40039l25.7998 -14.9004c10.8994 9.30078 23.3994 16.5 36.8994 21.3008v29.7998c0 3.39941 2.40039 6.39941 5.7002 7.09961c21.2002 4.7998 43.9004 5 66.2002 0c3.2998 -0.700195 5.7002 -3.7002 5.7002 -7.09961v-29.7998 c13.5 -4.80078 26 -12 36.8994 -21.3008l25.8008 14.9004c3 1.7002 6.69922 1.09961 9 -1.40039c15 -16.1992 26.5 -35.7998 33.1992 -57.3994c1 -3.2998 -0.299805 -6.7998 -3.2998 -8.5l-25.7998 -14.9004c2.59961 -14.0996 2.59961 -28.5 0 -42.5996zM496 79.5 c26.7998 0 48.5 21.7998 48.5 48.5s-21.7998 48.5 -48.5 48.5s-48.5 -21.7998 -48.5 -48.5s21.7002 -48.5 48.5 -48.5zM96 224c-35.2998 0 -64 28.7002 -64 64s28.7002 64 64 64s64 -28.7002 64 -64s-28.7002 -64 -64 -64zM320 192c-61.9004 0 -112 50.0996 -112 112 s50 111.9 111.9 111.9c61.8994 0 112 -50.1006 112 -112c0 -17.2002 -4.2002 -33.4004 -11.2002 -48c-0.799805 -0.5 -1.60059 -0.900391 -2.40039 -1.40039l-7.89941 4.59961c-5.90039 3.5 -12.7002 5.30078 -19.6006 5.30078c-11 0 -21.5 -4.60059 -28.8994 -12.6006 c-15.8008 -17.0996 -28 -37.5 -36.3008 -59.2002c-1.89941 -0.0996094 -3.69922 -0.599609 -5.59961 -0.599609zM425.2 -2.5v-9.2002c0 -7.5 2.5 -14.2998 6.2002 -20.2998h-255.4c-26.5 0 -48 21.5 -48 48v28.7998c0 63.6006 51.5996 115.2 115.3 115.2h8.2998 c20.9004 -10 43.9004 -16 68.5 -16c3.30078 0 6.5 0.400391 9.80078 0.599609c2.7998 -3.09961 6 -5.89941 9.7998 -8.09961l7.89941 -4.59961c-0.0996094 -2.60059 -0.0996094 -5.2002 0 -7.80078c-0.899414 -0.599609 -36.5 -15.7998 -25.7998 -50.2998 c7.90039 -25.7002 21.9004 -49.7998 40.2002 -69.5996c7.5 -8 18 -12.6006 28.9004 -12.6006c12.1992 0 19.2998 5 27.5 9.80078c2.19922 -1.30078 4.5 -2.7002 6.7998 -3.90039zM173.1 173.4c-40.2998 -22.1006 -68.8994 -62 -75.1992 -109.4h-65.9004 c-17.7002 0 -32 14.2998 -32 32v32c0 35.2998 28.7002 64 64 64h64c17.5996 0 33.5 -7.09961 45.0996 -18.5996z"/></svg></i><b class="sp"></b><p><span class="t" id="t2" style="width:73.50px;font-size:30.00px;letter-spacing:-1.219px;word-spacing:0.000px;top:0.00px;left:0.00px">Peers</span></p></a></li>
<li class="nav-item"><a class="nav-link"><i class="nav-icon"><svg class="fa " viewBox="0 -448 448 512" style="width:0.875em;" aria-hidden="true"><path transform="scale(1,-1)" d="M0 -16v272h448v-272c0 -26.5 -21.5 -48 -48 -48h-352c-26.5 0 -48 21.5 -48 48zM320 180v-40c0 -6.59961 5.40039 -12 12 -12h40c6.59961 0 12 5.40039 12 12v40c0 6.59961 -5.40039 12 -12 12h-40c-6.59961 0 -12 -5.40039 -12 -12zM320 52v-40 c0 -6.59961 5.40039 -12 12 -12h40c6.59961 0 12 5.40039 12 12v40c0 6.59961 -5.40039 12 -12 12h-40c-6.59961 0 -12 -5.40039 -12 -12zM192 180v-40c0 -6.59961 5.40039 -12 12 -12h40c6.59961 0 12 5.40039 12 12v40c0 6.59961 -5.40039 12 -12 12h-40 c-6.59961 0 -12 -5.40039 -12 -12zM192 52v-40c0 -6.59961 5.40039 -12 12 -12h40c6.59961 0 12 5.40039 12 12v40c0 6.59961 -5.40039 12 -12 12h-40c-6.59961 0 -12 -5.40039 -12 -12zM64 180v-40c0 -6.59961 5.40039 -12 12 -12h40c6.59961 0 12 5.40039 12 12v40 c0 6.59961 -5.40039 12 -12 12h-40c-6.59961 0 -12 -5.40039 -12 -12zM64 52v-40c0 -6.59961 5.40039 -12 12 -12h40c6.59961 0 12 5.40039 12 12v40c0 6.59961 -5.40039 12 -12 12h-40c-6.59961 0 -12 -5.40039 -12 -12zM400 384c26.5 0 48 -21.5 48 -48v-48h-448v48 c0 26.5 21.5 48 48 48h48v48c0 8.7998 7.2002 16 16 16h32c8.7998 0 16 -7.2002 16 -16v-48h128v48c0 8.7998 7.2002 16 16 16h32c8.7998 0 16 -7.2002 16 -16v-48h48z"/></svg></i><b class="sp"></b><p><span class="t" id="t3" style="width:135.27px;font-size:30.00px;letter-spacing:0.021px;word-spacing:0.000px;top:0.00px;left:0.00px">Scheduler</span></p></a></li>
<li class="nav-item"><a class="nav-link"><i class="nav-icon"><svg class="fa " viewBox="0 -448 512 512" style="width:1em;" aria-hidden="true"><path transform="scale(1,-1)" d="M416 128c52.9004 0 96 -43.0996 96 -96s-43.0996 -96 -96 -96h-277.8c13.5 16.2998 31.2998 39.2002 47.2998 64h230.5c17.5996 0 32 14.4004 32 32s-14.4004 32 -32 32h-96c-52.9004 0 -96 43.0996 -96 96s43.0996 96 96 96h45.2998 c-23.0996 32.5996 -45.2998 70.5 -45.2998 96c0 53 43 96 96 96s96 -43 96 -96s-96 -160 -96 -160h-96c-17.5996 0 -32 -14.4004 -32 -32s14.4004 -32 32 -32h96zM416 384c-17.7002 0 -32 -14.2998 -32 -32s14.2998 -32 32 -32s32 14.2998 32 32s-14.2998 32 -32 32zM96 192 c53 0 96 -43 96 -96s-96 -160 -96 -160s-96 107 -96 160s43 96 96 96zM96 64c17.7002 0 32 14.2998 32 32s-14.2998 32 -32 32s-32 -14.2998 -32 -32s14.2998 -32 32 -32z"/></svg></i><b class="sp"></b><p><span class="t" id="t4" style="width:250.08px;font-size:30.00px;letter-spacing:0.272px;word-spacing:-2.207px;top:0.00px;left:0.00px">Routing Templates</span></p></a></li>
<li class="nav-item"><a class="nav-link active"><i class="nav-icon"><svg class="fa " viewBox="0 -448 448 512" style="width:0.875em;" aria-hidden="true"><path transform="scale(1,-1)" d="M436 288h-20v-64h20c6.59961 0 12 -5.40039 12 -12v-40c0 -6.59961 -5.40039 -12 -12 -12h-20v-64h20c6.59961 0 12 -5.40039 12 -12v-40c0 -6.59961 -5.40039 -12 -12 -12h-20v-48c0 -26.5 -21.5 -48 -48 -48h-320c-26.5 0 -48 21.5 -48 48v416c0 26.5 21.5 48 48 48 h320c26.5 0 48 -21.5 48 -48v-48h20c6.59961 0 12 -5.40039 12 -12v-40c0 -6.59961 -5.40039 -12 -12 -12zM208 320c-35.2998 0 -64 -28.7002 -64 -64s28.7002 -64 64 -64s64 28.7002 64 64s-28.7002 64 -64 64zM320 83.2002v19.2002 c0 31.7998 -30.0996 57.5996 -67.2002 57.5996h-5c-12.2002 -5.09961 -25.7002 -8 -39.7998 -8s-27.5 2.90039 -39.7998 8h-5c-37.1006 0 -67.2002 -25.7998 -67.2002 -57.5996v-19.2002c0 -10.6006 10 -19.2002 22.4004 -19.2002h179.199 c12.4004 0 22.4004 8.59961 22.4004 19.2002z"/></svg></i><b class="sp"></b><p><span class="t" id="t5" style="width:57.48px;font-size:30.00px;letter-spacing:-2.930px;word-spacing:0.000px;top:0.00px;left:0.00px">DNS</span></p></a></li>
<li class="nav-item"><a class="nav-link"><i class="nav-icon"><svg class="fa " viewBox="0 -448 512 512" style="width:1em;" aria-hidden="true"><path transform="scale(1,-1)" d="M466.5 364.3c17.7998 -7.39941 29.5 -24.8994 29.5 -44.2998c0 -221.3 -135.9 -344.6 -221.6 -380.3c-11.8008 -4.90039 -25.1006 -4.90039 -36.9004 0c-107 44.5996 -221.5 181.8 -221.5 380.3c0 19.4004 11.7002 36.9004 29.5996 44.2998l192 80 c5.67578 2.35449 11.96 3.6543 18.4824 3.6543c6.52148 0 12.7432 -1.2998 18.418 -3.6543zM256.1 1.7002c93.7002 46.5996 172.5 156.3 175.801 307.7l-175.9 73.2998z"/></svg></i><b class="sp"></b><p><span class="t" id="t6" style="width:105.64px;font-size:30.00px;letter-spacing:0.326px;word-spacing:0.000px;top:0.00px;left:0.00px">Firewall</span></p></a></li>
<li class="nav-item"><a class="nav-link"><i class="nav-icon"><svg class="fa " viewBox="0 -448 512 512" style="width:1em;" aria-hidden="true"><path transform="scale(1,-1)" d="M128.73 252.68c6.58984 -4.12012 8.89941 -12.2393 6.33984 -19.5801c-3 -8.60938 -5.15039 -17.6094 -6.24023 -26.9395c-0.929688 -7.91016 -7.0498 -14.1602 -15.0098 -14.1602h-97.1299c-9.10059 0 -16.7402 7.62988 -16.1504 16.7197 c2.0293 31.5166 9.95215 61.9062 22.4502 89.2705c3.93945 8.62012 14.8896 11.4697 22.9297 6.4502zM319.03 440c9.16992 -2.36035 13.9102 -12.5996 10.3896 -21.3896l-37.4697 -104.03c-2.28027 -6.34961 -8.2998 -10.5801 -15.0498 -10.5801h-41.8008 c-6.92773 0.00292969 -12.8281 4.41211 -15.0498 10.5801l-37.4697 104.03c-3.52051 8.79004 1.21973 19.04 10.3896 21.3896c20.1699 5.17969 41.2607 8 63.0303 8s42.8604 -2.82031 63.0303 -8zM112 160c8.83984 0 16 -7.16016 16 -16v-64 c0 -8.83984 -7.16016 -16 -16 -16h-96c-8.83984 0 -16 7.16016 -16 16v64c0 8.83984 7.16016 16 16 16h96zM112 32c8.83984 0 16 -7.16016 16 -16v-64c0 -8.83984 -7.16016 -16 -16 -16h-96c-8.83984 0 -16 7.16016 -16 16v64c0 8.83984 7.16016 16 16 16h96zM189.31 315.67 c2.85059 -7.12012 -0.0195312 -14.8799 -6.2998 -19.29c-6 -4.2002 -11.6094 -8.89941 -16.79 -14.0498c-5.4502 -5.41016 -13.5996 -6.86035 -20.1094 -2.79004l-82.9307 51.8301c-8.06934 5.04004 -10.2793 16.2002 -4.21973 23.5195 c20.0459 24.1963 44.0801 44.3428 71.6104 59.8906c8.29004 4.67969 18.8896 0.519531 22.4199 -8.31055zM398.18 192c-7.95996 0 -14.0801 6.25 -15.0098 14.1602c-1.08984 9.32031 -3.22949 18.3301 -6.24023 26.9395c-2.55957 7.34082 -0.25 15.46 6.33984 19.5801 l82.8105 51.7607c8.04004 5.01953 18.9902 2.16992 22.9297 -6.4502c12.499 -27.3633 20.4219 -57.7529 22.4502 -89.2705c0.589844 -9.08984 -7.0498 -16.7197 -16.1504 -16.7197h-97.1299zM453.03 354.89c6.06934 -7.31934 3.84961 -18.4795 -4.2207 -23.5098 l-82.9297 -51.8301c-6.50977 -4.06934 -14.6699 -2.62012 -20.1104 2.79004c-5.17969 5.15039 -10.7891 9.85059 -16.7891 14.0498c-6.28027 4.40039 -9.15039 12.1602 -6.30078 19.2803l36.3203 90.7998c3.54004 8.83008 14.1396 12.9902 22.4199 8.31055 c27.5303 -15.5479 51.5645 -35.6943 71.6104 -59.8906zM496 160c8.83984 0 16 -7.16016 16 -16v-64c0 -8.83984 -7.16016 -16 -16 -16h-96c-8.83984 0 -16 7.16016 -16 16v64c0 8.83984 7.16016 16 16 16h96zM496 32c8.83984 0 16 -7.16016 16 -16v-64 c0 -8.83984 -7.16016 -16 -16 -16h-96c-8.83984 0 -16 7.16016 -16 16v64c0 8.83984 7.16016 16 16 16h96zM240 270.38c5.23047 0.889648 10.5195 1.62012 16 1.62012s10.7695 -0.730469 16 -1.62012v-294.38c0 -4.41992 -3.58008 -8 -8 -8h-16c-4.41992 0 -8 3.58008 -8 8 v294.38zM176 228.87c8.16016 12.2998 19.2197 22.3203 32 29.7695v-282.64c0 -4.41992 -3.58008 -8 -8 -8h-16c-4.41992 0 -8 3.58008 -8 8v252.87zM304 258.64c12.7803 -7.44922 23.8398 -17.4697 32 -29.7695v-252.87c0 -4.41992 -3.58008 -8 -8 -8h-16 c-4.41992 0 -8 3.58008 -8 8v282.64z"/></svg></i><b class="sp"></b><p><span class="t" id="t7" style="width:153.44px;font-size:30.00px;letter-spacing:-0.372px;word-spacing:0.000px;top:0.00px;left:0.00px">Gatekeeper</span></p></a></li>
<li class="nav-item"><a class="nav-link"><i class="nav-icon"><svg class="fa " viewBox="0 -448 640 512" style="width:1.25em;" aria-hidden="true"><path transform="scale(1,-1)" d="M640 184c0 -8.83984 -7.16016 -16 -16 -16h-104v-40h56c17.6699 0 32 -14.3301 32 -32v-128c0 -17.6699 -14.3301 -32 -32 -32h-160c-17.6699 0 -32 14.3301 -32 32v128c0 17.6699 14.3301 32 32 32h56v40h-304v-40h56c17.6699 0 32 -14.3301 32 -32v-128 c0 -17.6699 -14.3301 -32 -32 -32h-160c-17.6699 0 -32 14.3301 -32 32v128c0 17.6699 14.3301 32 32 32h56v40h-104c-8.83984 0 -16 7.16016 -16 16v16c0 8.83984 7.16016 16 16 16h280v40h-72c-17.6699 0 -32 14.3301 -32 32v128c0 17.6699 14.3301 32 32 32h192 c17.6699 0 32 -14.3301 32 -32v-128c0 -17.6699 -14.3301 -32 -32 -32h-72v-40h280c8.83984 0 16 -7.16016 16 -16v-16zM256 320h128v64h-128v-64zM192 0v64h-96v-64h96zM544 0v64h-96v-64h96z"/></svg></i><b class="sp"></b><p><span class="t" id="t8" style="width:174.91px;font-size:30.00px;letter-spacing:-0.363px;word-spacing:-1.572px;top:0.00px;left:0.00px">App Gateway</span></p></a></li>
<li class="nav-item"><a class="nav-link"><i class="nav-icon"><svg class="fa " viewBox="0 -448 640 512" style="width:1.25em;" aria-hidden="true"><path transform="scale(1,-1)" d="M257.981 175.029l-194.344 -194.344c-9.37305 -9.37207 -24.5684 -9.37207 -33.9404 0l-22.668 22.667c-9.35742 9.35742 -9.375 24.5225 -0.0400391 33.9014l154.021 154.746l-154.021 154.745c-9.33496 9.37891 -9.31738 24.5439 0.0400391 33.9014l22.667 22.667 c9.37305 9.37207 24.5684 9.37207 33.9404 0l194.344 -194.344c9.37207 -9.37207 9.37207 -24.5674 0 -33.9404zM640 -8c0 -13.2549 -10.7451 -24 -24 -24h-304c-13.2549 0 -24 10.7451 -24 24v32c0 13.2549 10.7451 24 24 24h304c13.2549 0 24 -10.7451 24 -24v-32z"/></svg></i><b class="sp"></b><p><span class="t" id="t9" style="width:107.91px;font-size:30.00px;letter-spacing:-0.362px;word-spacing:0.000px;top:0.00px;left:0.00px">Console</span></p></a></li>
<li class="nav-item"><a class="nav-link"><i class="nav-icon"><svg class="fa " viewBox="0 -448 640 512" style="width:1.25em;" aria-hidden="true"><path transform="scale(1,-1)" d="M96 224c-35.2998 0 -64 28.7002 -64 64s28.7002 64 64 64s64 -28.7002 64 -64s-28.7002 -64 -64 -64zM544 224c-35.2998 0 -64 28.7002 -64 64s28.7002 64 64 64s64 -28.7002 64 -64s-28.7002 -64 -64 -64zM576 192c35.2998 0 64 -28.7002 64 -64v-32 c0 -17.7002 -14.2998 -32 -32 -32h-66c-6.2002 47.4004 -34.7998 87.2998 -75.0996 109.4c11.5996 11.5 27.5 18.5996 45.0996 18.5996h64zM320 192c-61.9004 0 -112 50.0996 -112 112s50.0996 112 112 112s112 -50.0996 112 -112s-50.0996 -112 -112 -112zM396.8 160 c63.6006 0 115.2 -51.5996 115.2 -115.2v-28.7998c0 -26.5 -21.5 -48 -48 -48h-288c-26.5 0 -48 21.5 -48 48v28.7998c0 63.6006 51.5996 115.2 115.2 115.2h8.2998c20.9004 -10 43.9004 -16 68.5 -16s47.7002 6 68.5 16h8.2998zM173.1 173.4 c-40.2998 -22.1006 -68.8994 -62 -75.1992 -109.4h-65.9004c-17.7002 0 -32 14.2998 -32 32v32c0 35.2998 28.7002 64 64 64h64c17.5996 0 33.5 -7.09961 45.0996 -18.5996z"/></svg></i><b class="sp"></b><p><span class="t" id="t10" style="width:183.00px;font-size:30.00px;letter-spacing:-0.514px;word-spacing:-1.421px;top:0.00px;left:0.00px">User Manager</span></p></a></li>
<li class="nav-item"><a class="nav-link"><i class="nav-icon"><svg class="fa " viewBox="0 -448 640 512" style="width:1.25em;" aria-hidden="true"><path transform="scale(1,-1)" d="M512.1 257l-8.19922 -14.2998c-3 -5.2998 -9.40039 -7.5 -15.1006 -5.40039c-11.7998 4.40039 -22.5996 10.7002 -32.0996 18.6006c-4.60059 3.7998 -5.7998 10.5 -2.7998 15.6992l8.19922 14.3008c-6.89941 8 -12.2998 17.2998 -15.8994 27.3994h-16.5 c-6 0 -11.2002 4.2998 -12.2002 10.2998c-2 12 -2.09961 24.6006 0 37.1006c1 6 6.2002 10.3994 12.2002 10.3994h16.5c3.59961 10.1006 9 19.4004 15.8994 27.4004l-8.19922 14.2998c-3 5.2002 -1.90039 11.9004 2.7998 15.7002 c9.5 7.90039 20.3994 14.2002 32.0996 18.5996c5.7002 2.10059 12.1006 -0.0996094 15.1006 -5.39941l8.19922 -14.2998c10.5 1.89941 21.2002 1.89941 31.7002 0l8.2002 14.2998c3 5.2998 9.40039 7.5 15.0996 5.39941c11.8008 -4.39941 22.6006 -10.6992 32.1006 -18.5996 c4.59961 -3.7998 5.7998 -10.5 2.7998 -15.7002l-8.2002 -14.2998c6.90039 -8 12.2998 -17.2998 15.9004 -27.4004h16.5c6 0 11.2002 -4.2998 12.2002 -10.2998c2 -12 2.09961 -24.5996 0 -37.0996c-1 -6 -6.2002 -10.4004 -12.2002 -10.4004h-16.5 c-3.60059 -10.0996 -9 -19.3994 -15.9004 -27.3994l8.2002 -14.3008c3 -5.19922 1.90039 -11.8994 -2.7998 -15.6992c-9.5 -7.90039 -20.4004 -14.2002 -32.1006 -18.6006c-5.69922 -2.09961 -12.0996 0.100586 -15.0996 5.40039l-8.2002 14.2998 c-10.3994 -1.90039 -21.2002 -1.90039 -31.7002 0zM501.6 315.8c38.5 -29.5996 82.4004 14.2998 52.8008 52.7998c-38.5 29.7002 -82.4004 -14.2998 -52.8008 -52.7998zM386.3 161.9l33.7002 -16.8008c10.0996 -5.7998 14.5 -18.0996 10.5 -29.0996 c-8.90039 -24.2002 -26.4004 -46.4004 -42.5996 -65.7998c-7.40039 -8.90039 -20.2002 -11.1006 -30.3008 -5.2998l-29.0996 16.7998c-16 -13.7002 -34.5996 -24.6006 -54.9004 -31.7002v-33.5996c0 -11.6006 -8.2998 -21.6006 -19.6992 -23.6006 c-24.6006 -4.2002 -50.4004 -4.39941 -75.9004 0c-11.5 2 -20 11.9004 -20 23.6006v33.5996c-20.2998 7.2002 -38.9004 18 -54.9004 31.7002l-29.0996 -16.7002c-10 -5.7998 -22.9004 -3.59961 -30.2998 5.2998c-16.2002 19.4004 -33.2998 41.6006 -42.2002 65.7002 c-4 10.9004 0.400391 23.2002 10.5 29.0996l33.2998 16.8008c-3.89941 20.8994 -3.89941 42.3994 0 63.3994l-33.2998 16.9004c-10.0996 5.7998 -14.5996 18.0996 -10.5 29c8.90039 24.2002 26 46.3994 42.2002 65.7998c7.39941 8.90039 20.2002 11.0996 30.2998 5.2998 l29.0996 -16.7998c16 13.7002 34.6006 24.5996 54.9004 31.7002v33.7002c0 11.5 8.2002 21.5 19.5996 23.5c24.6006 4.19922 50.5 4.39941 76 0.0996094c11.5 -2 20 -11.9004 20 -23.5996v-33.6006c20.3008 -7.2002 38.9004 -18 54.9004 -31.7002l29.0996 16.8008 c10 5.7998 22.9004 3.59961 30.3008 -5.30078c16.1992 -19.3994 33.1992 -41.5996 42.0996 -65.7998c4 -10.8994 0.0996094 -23.2002 -10 -29.0996l-33.7002 -16.7998c3.90039 -21 3.90039 -42.5 0 -63.5zM268.7 140.8c59.2002 77 -28.7002 164.9 -105.7 105.7 c-59.2002 -77 28.7002 -164.9 105.7 -105.7zM512.1 -41.9004l-8.19922 -14.2998c-3 -5.2998 -9.40039 -7.5 -15.1006 -5.39941c-11.7998 4.39941 -22.5996 10.6992 -32.0996 18.5996c-4.60059 3.7998 -5.7998 10.5 -2.7998 15.7002l8.19922 14.2998 c-6.89941 8 -12.2998 17.2998 -15.8994 27.4004h-16.5c-6 0 -11.2002 4.2998 -12.2002 10.2998c-2 12 -2.09961 24.5996 0 37.0996c1 6 6.2002 10.4004 12.2002 10.4004h16.5c3.59961 10.0996 9 19.3994 15.8994 27.3994l-8.19922 14.3008 c-3 5.19922 -1.90039 11.8994 2.7998 15.6992c9.5 7.90039 20.3994 14.2002 32.0996 18.6006c5.7002 2.09961 12.1006 -0.100586 15.1006 -5.40039l8.19922 -14.2998c10.5 1.90039 21.2002 1.90039 31.7002 0l8.2002 14.2998c3 5.2998 9.40039 7.5 15.0996 5.40039 c11.8008 -4.40039 22.6006 -10.7002 32.1006 -18.6006c4.59961 -3.7998 5.7998 -10.5 2.7998 -15.6992l-8.2002 -14.3008c6.90039 -8 12.2998 -17.2998 15.9004 -27.3994h16.5c6 0 11.2002 -4.2998 12.2002 -10.2998c2 -12 2.09961 -24.6006 0 -37.1006 c-1 -6 -6.2002 -10.3994 -12.2002 -10.3994h-16.5c-3.60059 -10.1006 -9 -19.4004 -15.9004 -27.4004l8.2002 -14.2998c3 -5.2002 1.90039 -11.9004 -2.7998 -15.7002c-9.5 -7.90039 -20.4004 -14.2002 -32.1006 -18.5996 c-5.69922 -2.10059 -12.0996 0.0996094 -15.0996 5.39941l-8.2002 14.2998c-10.3994 -1.89941 -21.2002 -1.89941 -31.7002 0zM501.6 17c38.5 -29.5996 82.4004 14.2998 52.8008 52.7998c-38.5 29.6006 -82.4004 -14.2998 -52.8008 -52.7998z"/></svg></i><b class="sp"></b><p><span class="t" id="t11" style="width:141.52px;font-size:30.00px;letter-spacing:-0.441px;word-spacing:0.000px;top:0.00px;left:0.00px">WireGuard</span></p></a></li>
<li class="nav-item"><a class="nav-link"><i class="nav-icon"><svg class="fa " viewBox="0 -448 576 512" style="width:1.125em;" aria-hidden="true"><path transform="scale(1,-1)" d="M568.482 270.552l-144.004 -135.984c-15.1787 -14.335 -40.4785 -3.70703 -40.4785 17.4473v71.9629c-144.575 -0.969727 -205.566 -35.1123 -164.775 -171.353c4.4834 -14.9727 -12.8457 -26.5674 -25.0059 -17.3301 c-38.9668 29.5996 -74.2188 86.2168 -74.2188 143.366c0 143.937 117.599 172.5 264 173.312v72.0156c0 21.1738 25.3174 31.7676 40.4785 17.4473l144.004 -135.987c10.0195 -9.46289 10.0273 -25.4248 0 -34.8965zM384 68.8721c0 7.34473 6.53027 12.9053 13.7998 11.8594 c3.36816 -0.485352 6.75977 -0.711914 10.2607 -0.711914c8.3877 0 16.4424 1.44043 23.9287 4.08887c7.81348 2.76367 16.0107 -3.01465 16.0107 -11.3027v-88.8057c0 -26.5098 -21.4902 -48 -48 -48h-352c-26.5098 0 -48 21.4902 -48 48v352c0 26.5098 21.4902 48 48 48 h121.033c12.5508 0 16.6748 -16.8301 5.54492 -22.6309c-18.7773 -9.78613 -36.0615 -22.1084 -51.0137 -37.6758c-2.18164 -2.27637 -5.25098 -3.69141 -8.64844 -3.69336h-50.916v-320h320v68.8721z"/></svg></i><b class="sp"></b><p><span class="t" id="t12" style="width:136.69px;font-size:30.00px;letter-spacing:-0.389px;word-spacing:-1.546px;top:0.00px;left:0.00px">VPN Invite</span></p></a></li>
<li class="nav-item"><a class="nav-link"><i class="nav-icon"><svg class="fa " viewBox="0 -448 512 512" style="width:1em;" aria-hidden="true"><path transform="scale(1,-1)" d="M512 271.999c0 -97.2021 -78.7979 -175.999 -176 -175.999c-11.2197 0 -22.1904 1.06152 -32.8271 3.06934l-24.0117 -27.0146c-4.39746 -4.94727 -10.8047 -8.05469 -17.9385 -8.05469h-37.2227v-40c0 -13.2549 -10.7451 -24 -24 -24h-40v-40 c0 -13.2549 -10.7451 -24 -24 -24h-112c-13.2549 0 -24 10.7451 -24 24v78.0586c0 6.36523 2.5293 12.4707 7.0293 16.9717l161.802 161.802c-5.72266 17.3535 -8.83105 35.8965 -8.83105 55.168c0 97.2021 78.7969 175.999 175.999 176 c97.4893 0.000976562 176.001 -78.5107 176.001 -176.001zM336 320c0 -26.5098 21.4902 -48 48 -48s48 21.4902 48 48s-21.4902 48 -48 48s-48 -21.4902 -48 -48z"/></svg></i><b class="sp"></b><p><span class="t" id="t13" style="width:113.00px;font-size:30.00px;letter-spacing:-1.409px;word-spacing:-0.526px;top:0.00px;left:0.00px">API Keys</span></p></a></li>
<li class="nav-item"><a class="nav-link"><i class="nav-icon"><svg class="fa " viewBox="0 -448 512 512" style="width:1em;" aria-hidden="true"><path transform="scale(1,-1)" d="M480 288h-448c-17.6729 0 -32 14.3271 -32 32v64c0 17.6729 14.3271 32 32 32h448c17.6729 0 32 -14.3271 32 -32v-64c0 -17.6729 -14.3271 -32 -32 -32zM432 376c-13.2549 0 -24 -10.7451 -24 -24s10.7451 -24 24 -24s24 10.7451 24 24s-10.7451 24 -24 24zM368 376 c-13.2549 0 -24 -10.7451 -24 -24s10.7451 -24 24 -24s24 10.7451 24 24s-10.7451 24 -24 24zM480 128h-448c-17.6729 0 -32 14.3271 -32 32v64c0 17.6729 14.3271 32 32 32h448c17.6729 0 32 -14.3271 32 -32v-64c0 -17.6729 -14.3271 -32 -32 -32zM432 216 c-13.2549 0 -24 -10.7451 -24 -24s10.7451 -24 24 -24s24 10.7451 24 24s-10.7451 24 -24 24zM368 216c-13.2549 0 -24 -10.7451 -24 -24s10.7451 -24 24 -24s24 10.7451 24 24s-10.7451 24 -24 24zM480 -32h-448c-17.6729 0 -32 14.3271 -32 32v64 c0 17.6729 14.3271 32 32 32h448c17.6729 0 32 -14.3271 32 -32v-64c0 -17.6729 -14.3271 -32 -32 -32zM432 56c-13.2549 0 -24 -10.7451 -24 -24s10.7451 -24 24 -24s24 10.7451 24 24s-10.7451 24 -24 24zM368 56c-13.2549 0 -24 -10.7451 -24 -24s10.7451 -24 24 -24 s24 10.7451 24 24s-10.7451 24 -24 24z"/></svg></i><b class="sp"></b><p><span class="t" id="t14" style="width:93.97px;font-size:30.00px;letter-spacing:-0.177px;word-spacing:0.000px;top:0.00px;left:0.00px">Cluster</span></p></a></li>

  </ul></nav></div>
 </aside>
</div>
<div id="sb"><i></i></div>
<div id="wc"></div>
</body>
</html>
